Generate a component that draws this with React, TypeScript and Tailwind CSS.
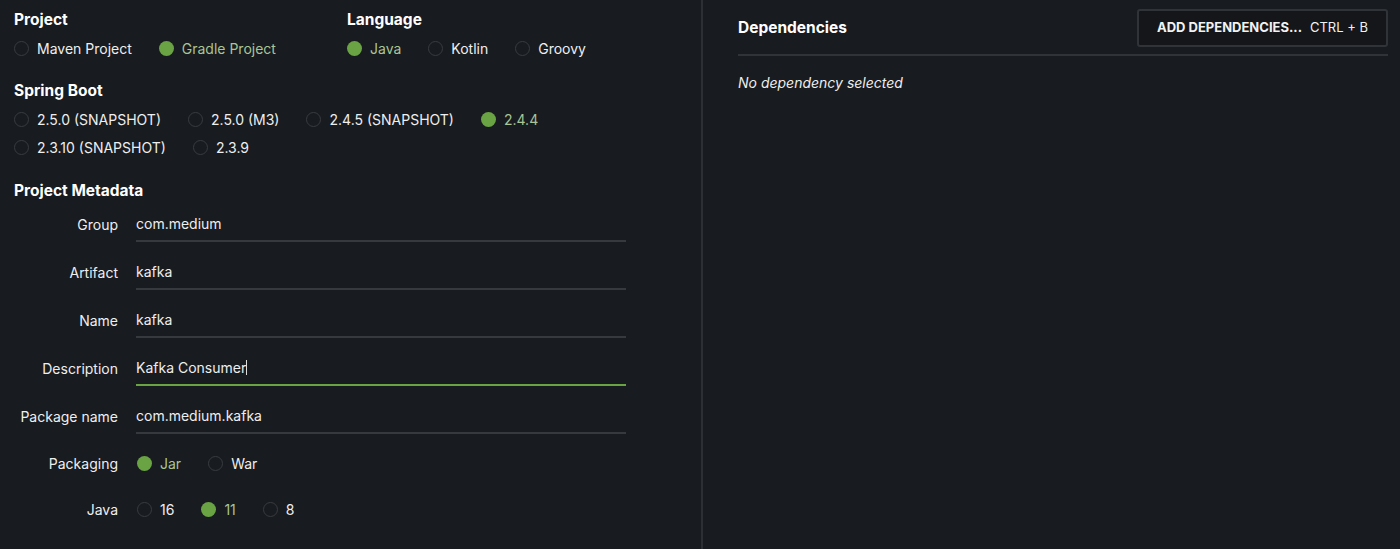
import React from "react";

type Opt = { label: string; checked?: boolean };

function Radio({ label, checked }: Opt) {
  return (
    <div className="flex items-center h-5">
      {checked ? (
        <span className="w-[15px] h-[15px] rounded-full bg-[#6aa343]" />
      ) : (
        <span className="w-[15px] h-[15px] rounded-full border-[1.5px] border-[#383c41]" />
      )}
      <span className={"ml-[8px] text-[14px] " + (checked ? "text-[#a9c596]" : "text-[#eeeeee]")}>
        {label}
      </span>
    </div>
  );
}

function RadioRow({ items }: { items: Opt[] }) {
  return (
    <div className="flex items-center gap-[27px]">
      {items.map((o) => (
        <Radio key={o.label} {...o} />
      ))}
    </div>
  );
}

function Field({ label, value, active, cursor }: { label: string; value: string; active?: boolean; cursor?: boolean }) {
  return (
    <div className="flex items-center">
      <div className="w-[104px] text-right text-[14px] text-[#eeeeee]">{label}</div>
      <div
        className={
          "ml-[18px] w-[490px] h-[35px] flex items-center border-b-2 text-[14px] text-[#eeeeee] " +
          (active ? "border-[#6aa343]" : "border-[#36393d]")
        }
      >
        {value}
        {cursor && <span className="w-px h-[15px] bg-[#dddddd]" />}
      </div>
    </div>
  );
}

export default function App() {
  return (
    <div
      className="w-[1400px] h-[549px] bg-[#181b1f] flex text-white overflow-hidden"
      style={{ fontFamily: "Inter, 'Noto Sans', sans-serif" }}
    >
      <div className="w-[701px] pl-[14px] pt-[10px]">
        <div className="flex">
          <div className="w-[333px]">
            <h2 className="text-[15.5px] font-bold leading-5">Project</h2>
            <div className="mt-2">
              <RadioRow items={[{ label: "Maven Project" }, { label: "Gradle Project", checked: true }]} />
            </div>
          </div>
          <div>
            <h2 className="text-[15.5px] font-bold leading-5">Language</h2>
            <div className="mt-2">
              <RadioRow items={[{ label: "Java", checked: true }, { label: "Kotlin" }, { label: "Groovy" }]} />
            </div>
          </div>
        </div>

        <h2 className="mt-[23px] text-[15.5px] font-bold leading-5">Spring Boot</h2>
        <div className="mt-2 flex flex-col gap-2">
          <RadioRow
            items={[
              { label: "2.5.0 (SNAPSHOT)" },
              { label: "2.5.0 (M3)" },
              { label: "2.4.5 (SNAPSHOT)" },
              { label: "2.4.4", checked: true },
            ]}
          />
          <RadioRow items={[{ label: "2.3.10 (SNAPSHOT)" }, { label: "2.3.9" }]} />
        </div>

        <h2 className="mt-[24px] text-[15.5px] font-bold leading-5">Project Metadata</h2>
        <div className="mt-[6px] flex flex-col gap-[13px]">
          <Field label="Group" value="com.medium" />
          <Field label="Artifact" value="kafka" />
          <Field label="Name" value="kafka" />
          <Field label="Description" value="Kafka Consumer" active cursor />
          <Field label="Package name" value="com.medium.kafka" />
        </div>
        <div className="mt-[19px] flex items-center">
          <div className="w-[104px] text-right text-[14px] text-[#eeeeee]">Packaging</div>
          <div className="ml-[18px] pl-[1px]">
            <RadioRow items={[{ label: "Jar", checked: true }, { label: "War" }]} />
          </div>
        </div>
        <div className="mt-[25px] flex items-center">
          <div className="w-[104px] text-right text-[14px] text-[#eeeeee]">Java</div>
          <div className="ml-[18px] pl-[1px]">
            <RadioRow items={[{ label: "16" }, { label: "11", checked: true }, { label: "8" }]} />
          </div>
        </div>
      </div>

      <div className="w-[2px] h-full bg-[#2c2f34]" />

      <div className="flex-1 pl-[35px] pr-[12px] pt-[9px]">
        <div className="flex items-center justify-between h-[38px]">
          <h2 className="text-[15.5px] font-bold">Dependencies</h2>
          <button className="w-[251px] h-[38px] rounded-[3px] border-2 border-[#303338] bg-[#141619] flex items-center justify-center text-[13px] text-[#f2f2f2]">
            <span className="font-bold">ADD DEPENDENCIES...</span>
            <span className="ml-2">CTRL + B</span>
          </button>
        </div>
        <div className="mt-[7px] h-[2px] bg-[#303338]" />
        <p className="mt-[16px] text-[14px] italic text-[#eeeeee]">No dependency selected</p>
      </div>
    </div>
  );
}
